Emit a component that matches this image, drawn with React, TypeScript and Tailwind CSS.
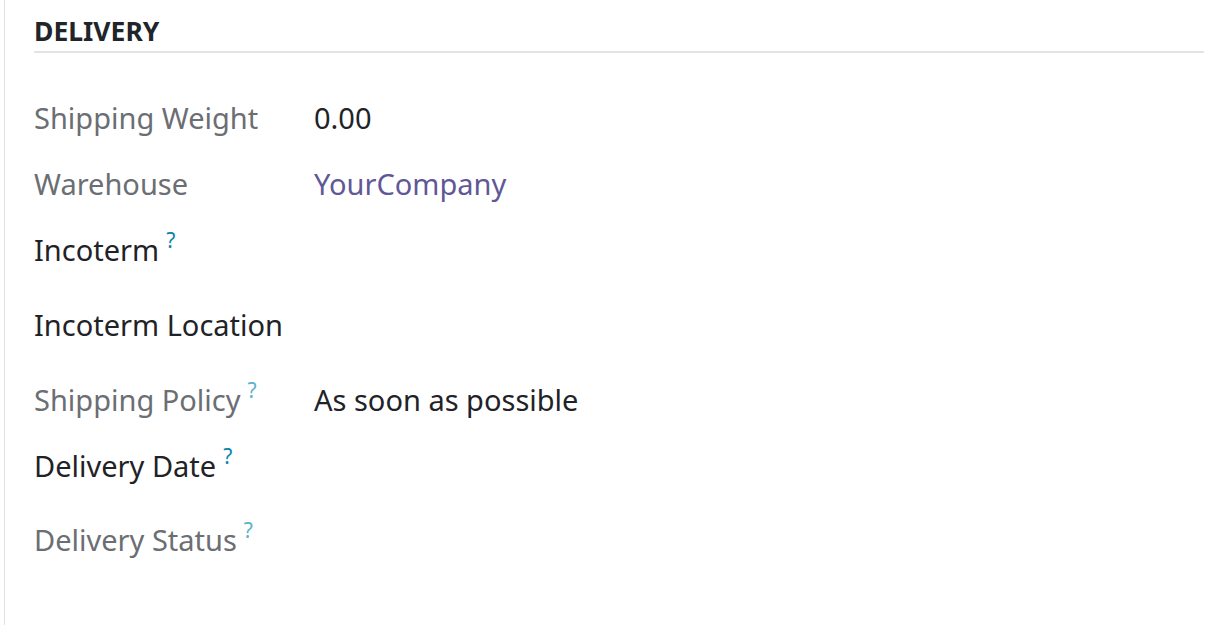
import React from "react";

type Row = {
  label: string;
  dark?: boolean;
  help?: boolean;
  value?: string;
  link?: boolean;
  h: string;
};

const rows: Row[] = [
  { label: "Shipping Weight", value: "0.00", h: "h-[66px]" },
  { label: "Warehouse", value: "YourCompany", link: true, h: "h-[66px]" },
  { label: "Incoterm", dark: true, help: true, h: "h-[75px]" },
  { label: "Incoterm Location", dark: true, h: "h-[75px]" },
  { label: "Shipping Policy", help: true, value: "As soon as possible", h: "h-[66px]" },
  { label: "Delivery Date", dark: true, help: true, h: "h-[74px]" },
  { label: "Delivery Status", help: true, h: "h-[66px]" },
];

export default function App() {
  return (
    <div
      className="w-[1218px] h-[625px] bg-white overflow-hidden pl-[4px]"
      style={{ fontFamily: '"Noto Sans", "Open Sans", sans-serif' }}
    >
      <div className="h-full border-l border-[#dfe2e8] pl-[29px] pr-[14px]">
        <div className="pt-[15px]">
          <div className="h-[36px] text-[26.5px] leading-[32px] font-bold text-[#212529]">
            DELIVERY
          </div>
          <div className="h-[2px] bg-[#e3e3e3]" />
        </div>
        <div className="pt-[45px] flex flex-col">
          {rows.map((r) => (
            <div key={r.label} className={`flex ${r.h}`}>
              <div className="w-[280px] shrink-0 flex items-start">
                <span
                  className={`text-[29px] leading-[40px] ${
                    r.dark ? "text-[#1f2328]" : "text-[#6b6e73]"
                  }`}
                >
                  {r.label}
                </span>
                {r.help && (
                  <span
                    className={`ml-[7px] text-[21px] leading-[21px] ${
                      r.dark ? "text-[#0b86a8]" : "text-[#5db3cc]"
                    }`}
                  >
                    ?
                  </span>
                )}
              </div>
              {r.value && (
                <span
                  className={`text-[29px] leading-[40px] ${
                    r.link ? "text-[#5f5897]" : "text-[#1f2328]"
                  }`}
                >
                  {r.value}
                </span>
              )}
            </div>
          ))}
        </div>
      </div>
    </div>
  );
}
